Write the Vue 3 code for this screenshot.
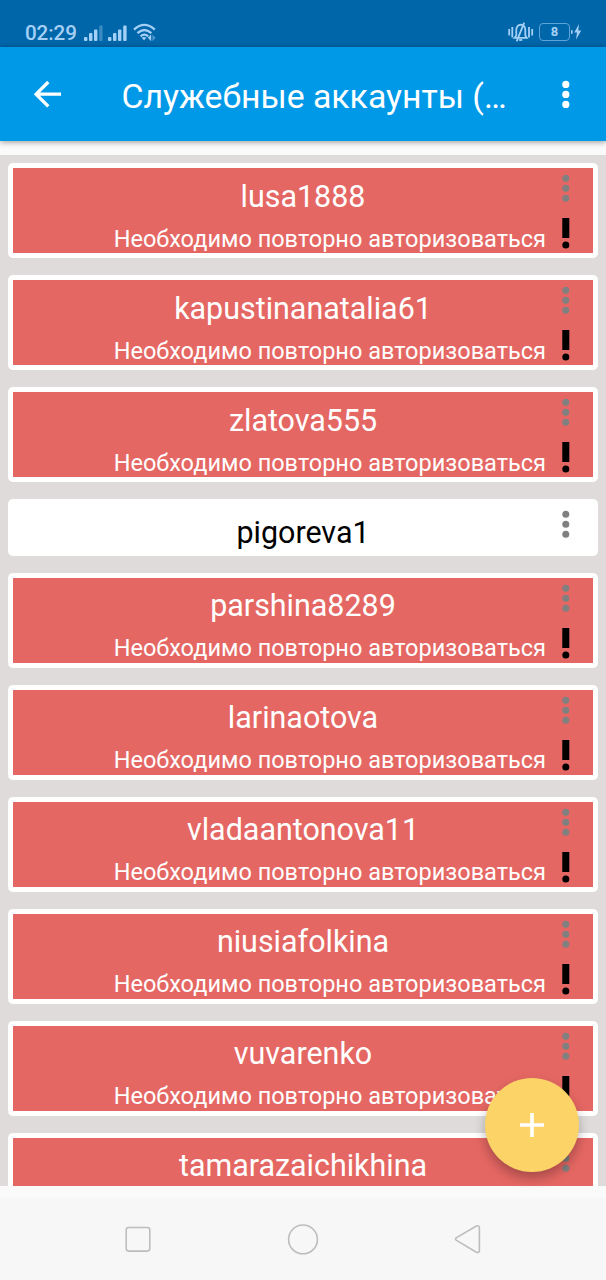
<template>
  <div class="screen">
    <header class="status">
      <div class="status__left">
        <span class="status__time">02:29</span>
        <svg class="status__signal" width="19" height="16" viewBox="0 0 19 16">
          <rect
            v-for="(bar, i) in bars"
            :key="i"
            :x="bar.x"
            :y="16 - bar.h"
            width="3.4"
            :height="bar.h"
            rx="1"
            :opacity="i === 3 ? 0.35 : 1"
          />
        </svg>
        <svg class="status__signal status__signal--second" width="19" height="16" viewBox="0 0 19 16">
          <rect
            v-for="(bar, i) in bars"
            :key="i"
            :x="bar.x"
            :y="16 - bar.h"
            width="3.4"
            :height="bar.h"
            rx="1"
          />
        </svg>
        <svg class="status__wifi" width="24" height="19" viewBox="0 0 24 19">
          <g fill="none" stroke="#a5d0f5" stroke-width="2.3">
            <path d="M1 6.6 Q11.3 -2.8 21.8 6.6" />
            <path d="M4.4 10.2 Q11.3 3.8 18.4 10.2" />
            <path d="M7.6 13.3 Q11.3 10 15.2 13.3" />
          </g>
          <path d="M8.6 14.8 Q11 13.2 13.4 14.8 L11 17.2 Z" fill="#a5d0f5" />
          <path d="M18.2 11.5 V18.2 L14.8 14.8 Z" fill="#a5d0f5" />
          <path d="M19.4 11.5 V18.2 L22.8 14.8 Z" fill="#a5d0f5" opacity="0.45" />
        </svg>
      </div>
      <div class="status__right">
        <svg width="26" height="20" viewBox="0 0 26 20">
          <g fill="none" stroke="#a5d0f5" stroke-width="1.8">
            <path d="M1.2 7 V13.5 M4.3 5 V15.5 M21 5 V15.5 M24.2 7 V13.5" />
            <path d="M6.5 15.8 H18.8 L17.3 13.5 V7.5 Q17 3 12.7 2.6 Q8.7 3 8.3 7.5 V13.5 Z" />
            <path d="M8.7 19.3 L16.2 0.6" />
            <path d="M11.2 18 H14.2" />
          </g>
        </svg>
        <div class="battery">8</div>
        <svg class="status__bolt" width="11" height="18" viewBox="0 0 11 18">
          <rect x="0" y="7.2" width="1.6" height="3.6" fill="#a5d0f5" />
          <path d="M8 1 L3.3 9.4 H6 L5 16.8 L10.2 7.6 H7.3 Z" fill="#a5d0f5" />
        </svg>
      </div>
    </header>

    <div class="toolbar">
      <svg class="toolbar__back" width="28" height="28" viewBox="0 0 28 28">
        <path d="M27 14.2 H2.4 M14.3 2 L2.1 14.2 L14.3 26.4" fill="none" stroke="#fff" stroke-width="3.3" />
      </svg>
      <h1 class="toolbar__title">Служебные аккаунты (…</h1>
      <svg class="toolbar__more" width="8" height="28" viewBox="0 0 8 28">
        <circle v-for="y in [4.4, 14.4, 24.4]" :key="y" cx="3.8" :cy="y" r="3.6" fill="#fff" />
      </svg>
    </div>

    <main class="list">
      <div
        v-for="account in accounts"
        :key="account.name"
        class="card"
        :class="{ 'card--error': !account.ok }"
      >
        <div class="card__body">
          <div class="card__name">{{ account.name }}</div>
          <div v-if="!account.ok" class="card__note">Необходимо повторно авторизоваться</div>
          <div class="card__actions">
            <svg width="8" height="28" viewBox="0 0 8 28">
              <circle v-for="y in [4.3, 14.3, 24.3]" :key="y" cx="3.8" :cy="y" r="3.5" fill="#808080" />
            </svg>
            <svg v-if="!account.ok" class="card__alert" width="8" height="31" viewBox="0 0 8 31">
              <rect x="0.3" y="0" width="7" height="20" />
              <circle cx="3.8" cy="27" r="3.5" />
            </svg>
          </div>
        </div>
      </div>
    </main>

    <nav class="nav">
      <svg width="32" height="32" viewBox="0 0 32 32">
        <rect x="4.2" y="4.5" width="23.6" height="23.6" rx="2.5" />
      </svg>
      <svg width="32" height="32" viewBox="0 0 32 32">
        <circle cx="16" cy="16.4" r="14.4" />
      </svg>
      <svg width="32" height="32" viewBox="0 0 32 32">
        <path d="M4.5 14.6 Q2.4 16 4.5 17.4 L24.4 29.2 Q27.2 30.2 27.4 27.6 V4.6 Q27.2 2 24.4 3 Z" />
      </svg>
    </nav>

    <button class="fab" type="button">
      <svg width="24" height="24" viewBox="0 0 24 24">
        <path d="M12 0 V24 M0 12 H24" stroke="#fff" stroke-width="3.6" />
      </svg>
    </button>
  </div>
</template>

<script setup>
const bars = [
  { x: 0, h: 4 },
  { x: 5, h: 8 },
  { x: 10, h: 11.5 },
  { x: 15.2, h: 15.5 }
]

const accounts = [
  { name: 'lusa1888' },
  { name: 'kapustinanatalia61' },
  { name: 'zlatova555' },
  { name: 'pigoreva1', ok: true },
  { name: 'parshina8289' },
  { name: 'larinaotova' },
  { name: 'vladaantonova11' },
  { name: 'niusiafolkina' },
  { name: 'vuvarenko' },
  { name: 'tamarazaichikhina' }
]
</script>

<style>
body {
  margin: 0;
}
</style>

<style scoped>
.screen {
  position: relative;
  display: flex;
  flex-direction: column;
  width: 606px;
  height: 1280px;
  overflow: hidden;
  background: #fafafa;
  font-family: Roboto, 'Liberation Sans', sans-serif;
}
.status {
  display: flex;
  justify-content: space-between;
  flex-shrink: 0;
  box-sizing: border-box;
  height: 47px;
  padding: 22px 25px 0;
  background: #0066aa;
  color: #a5d0f5;
}
.status__left,
.status__right {
  display: flex;
  align-items: flex-start;
}
.status__time {
  width: 59px;
  font-size: 20.6px;
  font-weight: 500;
  line-height: 22px;
  letter-spacing: -0.1px;
}
.status__signal {
  margin-top: 3px;
  fill: #a5d0f5;
}
.status__signal--second {
  margin-left: 5px;
}
.status__wifi {
  margin: 1px 0 0 6px;
}
.battery {
  box-sizing: border-box;
  width: 31px;
  height: 18px;
  margin: 1px 1px 0 5px;
  border: 1.5px solid #5fa3d8;
  border-radius: 4px;
  font-size: 13px;
  font-weight: 700;
  line-height: 16px;
  text-align: center;
}
.status__bolt {
  margin: 1px -1px 0 0;
}
.toolbar {
  position: relative;
  display: flex;
  align-items: center;
  flex-shrink: 0;
  box-sizing: border-box;
  height: 94px;
  padding: 0 36px 0 34px;
  background: #0099e8;
  box-shadow: 0 1px 6px rgba(0, 0, 0, 0.4);
}
.toolbar__title {
  flex: 1;
  margin: 5px 0 0 59.5px;
  color: #fff;
  font-size: 33.8px;
  font-weight: 400;
  line-height: 40px;
  white-space: nowrap;
}
.list {
  display: flex;
  flex-direction: column;
  flex-shrink: 0;
  gap: 17px;
  box-sizing: border-box;
  height: 1031px;
  margin-top: 14px;
  padding: 8.4px 8px 0;
  overflow: hidden;
  background: #e0dbdb;
}
.card {
  flex-shrink: 0;
  box-sizing: border-box;
  height: 56.3px;
  padding: 5px;
  border-radius: 5px;
  background: #fff;
  color: #000;
}
.card--error {
  height: 95px;
  color: #fff;
}
.card__body {
  position: relative;
  box-sizing: border-box;
  height: 100%;
  padding-top: 8.3px;
}
.card--error .card__body {
  background: #e56763;
}
.card__name {
  font-size: 30.45px;
  line-height: 39px;
  text-align: center;
}
.card__note {
  margin: 9.3px 47px 0 0;
  font-size: 23.52px;
  line-height: 28px;
  text-align: right;
  white-space: nowrap;
}
.card__actions {
  position: absolute;
  top: 6px;
  right: 23px;
  display: flex;
  flex-direction: column;
}
.card__alert {
  margin-top: 16px;
}
.nav {
  display: flex;
  align-items: center;
  justify-content: space-between;
  box-sizing: border-box;
  height: 82px;
  margin-top: 12px;
  padding: 0 122px;
  background: #f7f7f7;
}
.nav svg {
  fill: none;
  stroke: #bdbdbd;
  stroke-width: 1.6;
}
.fab {
  position: absolute;
  top: 1078px;
  left: 485px;
  display: flex;
  align-items: center;
  justify-content: center;
  width: 94px;
  height: 94px;
  padding: 0;
  border: 0;
  border-radius: 50%;
  background: #fcd367;
  box-shadow: 0 6px 12px rgba(0, 0, 0, 0.28);
}
</style>
